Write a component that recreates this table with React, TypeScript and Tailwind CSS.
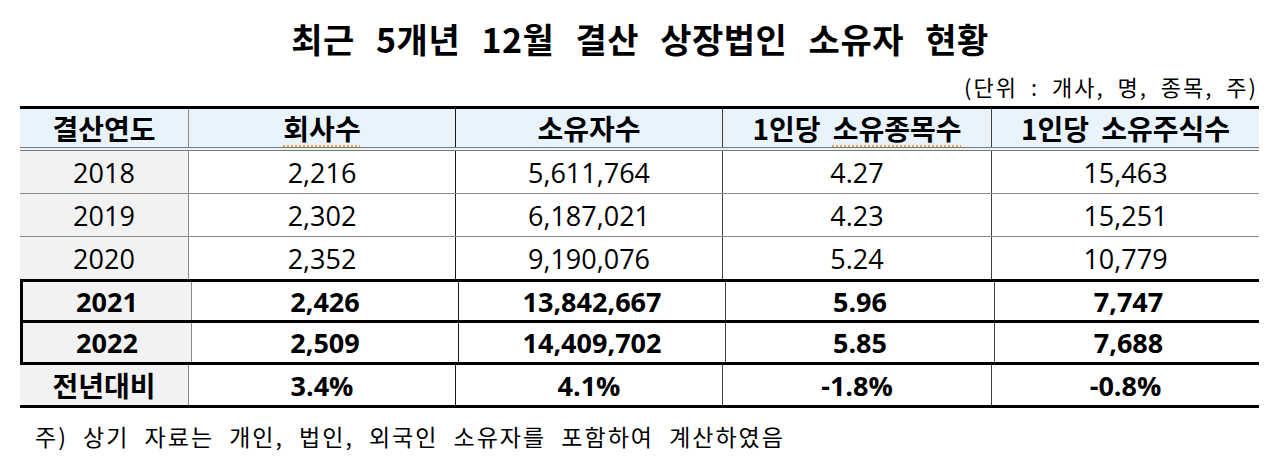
import React from "react";

const cols = "grid grid-cols-[169px_267px_267px_269px_267px]";

type RowProps = {
  cells: string[];
  bold?: boolean;
  h: string;
  bottom?: string;
};

function Row({ cells, bold, h, bottom = "" }: RowProps) {
  const weight = bold ? "font-bold" : "font-normal";
  const div = ["border-r border-[#8a8a8a]", "border-r border-[#1a1a1a]", "border-r border-[#404040]", "border-r border-[#404040]", ""];
  return (
    <div className={`${cols} ${h} ${bottom}`}>
      {cells.map((c, i) => (
        <div
          key={i}
          className={`flex items-center justify-center text-[27px] leading-none text-black ${weight} ${div[i]} ${i === 0 ? "bg-[#f2f2f2]" : "bg-white"}`}
        >
          {c}
        </div>
      ))}
    </div>
  );
}

export default function App() {
  return (
    <div className="w-[1280px] h-[461px] bg-white font-['Open_Sans','Noto_Sans_CJK_KR',sans-serif] text-black overflow-hidden">
      <div className="h-[74px] pt-[4px] flex items-center justify-center">
        <h1 className="text-[34px] font-bold leading-none tracking-[0.5px] [word-spacing:13px] font-['Noto_Sans_CJK_KR',sans-serif]">
          최근 5개년 12월 결산 상장법인 소유자 현황
        </h1>
      </div>
      <div className="h-[32px] pb-[8px] flex items-center justify-end pr-[22px]">
        <span className="text-[22px] leading-[26px] tracking-[2px] [word-spacing:6px] font-['Noto_Sans_CJK_KR',sans-serif]">
          (단위 : 개사, 명, 종목, 주)
        </span>
      </div>

      <div className="ml-[20px] w-[1239px]">
        <div className={`${cols} border-t-[3px] border-black border-b-[4px] border-b-[#7a7a7a] [border-bottom-style:double] bg-[#e9f3fb] h-[45px]`}>
          <div className="flex items-center justify-center text-[28px] font-bold leading-none border-r border-[#8a8a8a] font-['Noto_Sans_CJK_KR',sans-serif]">
            결산연도
          </div>
          <div className="flex items-center justify-center text-[28px] font-bold leading-none border-r border-[#1a1a1a] font-['Noto_Sans_CJK_KR',sans-serif]">
            <span className="underline decoration-dotted decoration-[#f0a050] decoration-2 underline-offset-[5px]">회사수</span>
          </div>
          <div className="flex items-center justify-center text-[28px] font-bold leading-none border-r border-[#404040] font-['Noto_Sans_CJK_KR',sans-serif]">
            소유자수
          </div>
          <div className="flex items-center justify-center text-[28px] font-bold leading-none border-r border-[#404040] font-['Noto_Sans_CJK_KR',sans-serif] [word-spacing:6px]">
            <span>
              1인당{" "}
              <span className="underline decoration-dotted decoration-[#f0a050] decoration-2 underline-offset-[5px]">소유종목수</span>
            </span>
          </div>
          <div className="flex items-center justify-center text-[28px] font-bold leading-none font-['Noto_Sans_CJK_KR',sans-serif] [word-spacing:6px]">
            1인당 소유주식수
          </div>
        </div>

        <Row cells={["2018", "2,216", "5,611,764", "4.27", "15,463"]} h="h-[43px]" bottom="border-b border-[#8a8a8a]" />
        <Row cells={["2019", "2,302", "6,187,021", "4.23", "15,251"]} h="h-[43px]" bottom="border-b border-[#8a8a8a]" />
        <Row cells={["2020", "2,352", "9,190,076", "5.24", "10,779"]} h="h-[42px]" />

        <div className="border-[3px] border-black">
          <Row cells={["2021", "2,426", "13,842,667", "5.96", "7,747"]} bold h="h-[41px]" bottom="border-b-[3px] border-black" />
          <Row cells={["2022", "2,509", "14,409,702", "5.85", "7,688"]} bold h="h-[39px]" />
        </div>

        <div className={`${cols} h-[43px] border-b-[3px] border-black`}>
          <div className="flex items-center justify-center text-[28px] font-bold leading-none bg-[#f2f2f2] border-r border-[#8a8a8a] font-['Noto_Sans_CJK_KR',sans-serif]">
            전년대비
          </div>
          <div className="flex items-center justify-center text-[27px] font-bold leading-none border-r border-[#1a1a1a]">3.4%</div>
          <div className="flex items-center justify-center text-[27px] font-bold leading-none border-r border-[#404040]">4.1%</div>
          <div className="flex items-center justify-center text-[27px] font-bold leading-none border-r border-[#404040]">-1.8%</div>
          <div className="flex items-center justify-center text-[27px] font-bold leading-none">-0.8%</div>
        </div>
      </div>

      <div className="h-[53px] pt-[4px] flex items-center pl-[35px]">
        <span className="text-[23px] leading-none tracking-[2px] [word-spacing:8px] font-['Noto_Sans_CJK_KR',sans-serif]">
          주) 상기 자료는 개인, 법인, 외국인 소유자를 포함하여 계산하였음
        </span>
      </div>
    </div>
  );
}
